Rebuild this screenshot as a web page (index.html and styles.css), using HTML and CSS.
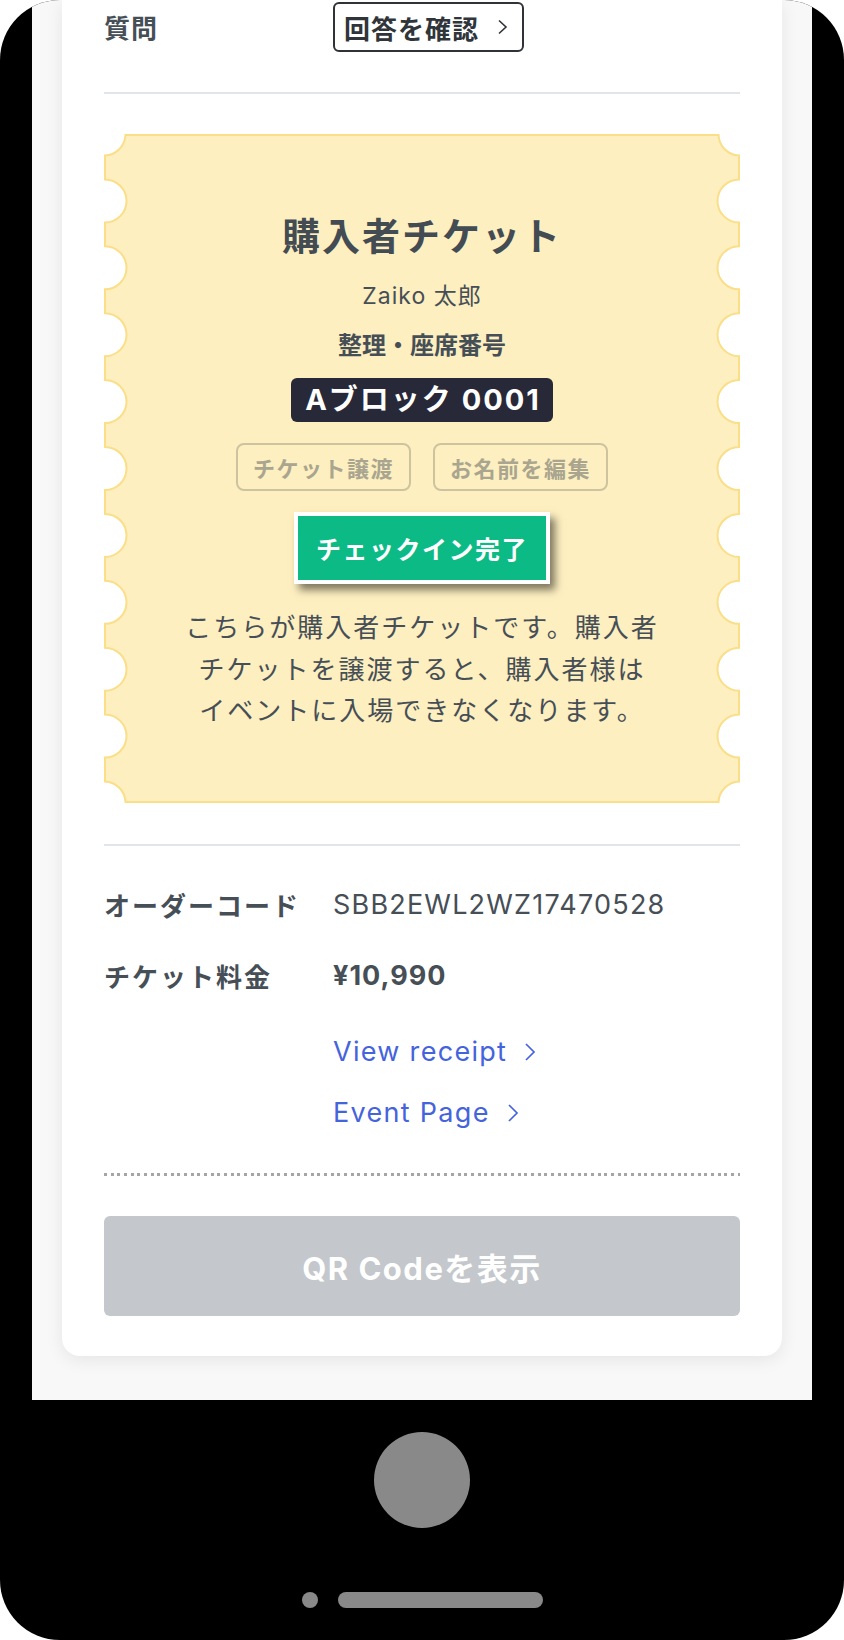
FILE: index.html
```html
<!DOCTYPE html>
<html lang="ja">
<head>
<meta charset="utf-8">
<title>チケット</title>
<link rel="stylesheet" href="styles.css">
</head>
<body>
<div class="phone">
  <div class="screen">
    <div class="card">
      <div class="grid-row qa-row">
        <div class="label">質問</div>
        <div class="value">
          <button class="answer-btn"><span>回答を確認</span><svg class="chev-dark" viewBox="0 0 11 16" width="11" height="16"><polyline points="2,1.5 9,8 2,14.5" fill="none" stroke="#2f3337" stroke-width="1.6"/></svg></button>
        </div>
      </div>
      <hr class="divider first">
      <div class="ticket">
        <h2 class="ticket-title">購入者チケット</h2>
        <div class="holder">Zaiko 太郎</div>
        <div class="seat-label">整理・座席番号</div>
        <div class="seat">Aブロック 0001</div>
        <div class="actions">
          <button class="ghost">チケット譲渡</button>
          <button class="ghost">お名前を編集</button>
        </div>
        <div class="checkin">チェックイン完了</div>
        <p class="note">こちらが購入者チケットです。購入者<br>チケットを譲渡すると、購入者様は<br>イベントに入場できなくなります。</p>
      </div>
      <hr class="divider second">
      <div class="info">
        <div class="label">オーダーコード</div>
        <div class="value code">SBB2EWL2WZ17470528</div>
        <div class="label price-label">チケット料金</div>
        <div class="value price">¥10,990</div>
        <a class="link receipt">View receipt<svg viewBox="0 0 12 20" width="12" height="20"><polyline points="2,2 10,10 2,18" fill="none" stroke="currentColor" stroke-width="1.7"/></svg></a>
        <a class="link event">Event Page<svg viewBox="0 0 12 20" width="12" height="20"><polyline points="2,2 10,10 2,18" fill="none" stroke="currentColor" stroke-width="1.7"/></svg></a>
      </div>
      <div class="dots"></div>
      <button class="qr">QR Codeを表示</button>
    </div>
  </div>
  <div class="hardware">
    <div class="home"></div>
    <div class="indicators"><span class="dot"></span><span class="bar"></span></div>
  </div>
</div>
</body>
</html>
```
FILE: styles.css
```css
* { box-sizing: border-box; }

body {
  margin: 0;
  background: #fff;
  font-family: "Inter", "Noto Sans CJK JP", sans-serif;
  color: #464e56;
}

.phone {
  width: 844px;
  height: 1640px;
  background: #000;
  border-radius: 60px;
  padding: 0 32px;
  display: flex;
  flex-direction: column;
  overflow: hidden;
}

.screen {
  height: 1400px;
  flex: none;
  background: #f8f8f8;
  padding: 0 30px;
}

.card {
  background: #fff;
  border-radius: 0 0 18px 18px;
  box-shadow: 0 4px 18px rgba(0, 0, 0, 0.08);
  padding: 2px 42px 40px;
}

.grid-row {
  display: grid;
  grid-template-columns: 229px 1fr;
  align-items: center;
}

.label {
  font-family: "Noto Sans CJK JP", sans-serif;
  font-weight: 700;
  font-size: 26px;
  line-height: 36px;
  letter-spacing: 2px;
  color: #464e56;
}

.qa-row .label { letter-spacing: 1px; }

.answer-btn {
  display: inline-flex;
  align-items: center;
  gap: 18px;
  height: 50px;
  padding: 0 14px 0 9px;
  border: 2px solid #2f3337;
  border-radius: 6px;
  background: #fff;
  font-family: "Noto Sans CJK JP", sans-serif;
  font-weight: 700;
  font-size: 26px;
  letter-spacing: 1px;
  color: #30353a;
}

.divider {
  border: 0;
  height: 2px;
  background: #e1e4e8;
  margin: 0;
}
.divider.first { margin-top: 40px; }
.divider.second { margin-top: 41px; }

.ticket {
  margin-top: 40px;
  height: 669px;
  padding-top: 76px;
  display: flex;
  flex-direction: column;
  align-items: center;
  background: url("data:image/svg+xml;utf8,<svg xmlns='http://www.w3.org/2000/svg' viewBox='0 0 636 669' preserveAspectRatio='none'><path d='M21.5 1H614.5A21.5 21.5 0 0 0 635 21.5V45.4A21.5 21.5 0 0 0 635 88.4V112.3A21.5 21.5 0 0 0 635 155.3V179.2A21.5 21.5 0 0 0 635 222.2V246.1A21.5 21.5 0 0 0 635 289.1V313A21.5 21.5 0 0 0 635 356V379.9A21.5 21.5 0 0 0 635 422.9V446.8A21.5 21.5 0 0 0 635 489.8V513.7A21.5 21.5 0 0 0 635 556.7V580.6A21.5 21.5 0 0 0 635 623.6V647.5A21.5 21.5 0 0 0 614.5 668H21.5A21.5 21.5 0 0 0 1 647.5V623.6A21.5 21.5 0 0 0 1 580.6V556.7A21.5 21.5 0 0 0 1 513.7V489.8A21.5 21.5 0 0 0 1 446.8V422.9A21.5 21.5 0 0 0 1 379.9V356A21.5 21.5 0 0 0 1 313V289.1A21.5 21.5 0 0 0 1 246.1V222.2A21.5 21.5 0 0 0 1 179.2V155.3A21.5 21.5 0 0 0 1 112.3V88.4A21.5 21.5 0 0 0 1 45.4V21.5A21.5 21.5 0 0 0 21.5 1Z' fill='%23fdefc0' stroke='%23fbde88' stroke-width='2'/></svg>") no-repeat 0 0 / 100% 100%;
}

.ticket-title {
  margin: 0;
  font-family: "Noto Sans CJK JP", sans-serif;
  font-weight: 700;
  font-size: 38px;
  line-height: 48px;
  letter-spacing: 2px;
  color: #434b53;
}

.holder {
  margin-top: 22px;
  font-size: 23px;
  line-height: 32px;
  font-weight: 400;
  letter-spacing: 1px;
}

.seat-label {
  margin-top: 16px;
  font-family: "Noto Sans CJK JP", sans-serif;
  font-weight: 700;
  font-size: 24px;
  line-height: 32px;
}

.seat {
  margin-top: 18px;
  height: 44px;
  line-height: 44px;
  padding: 0 12px 0 14px;
  background: #272838;
  color: #fff;
  font-weight: 700;
  font-size: 29px;
  letter-spacing: 2px;
  border-radius: 6px;
}

.actions {
  margin-top: 21px;
  display: flex;
  gap: 22px;
}

.ghost {
  width: 175px;
  height: 48px;
  padding: 0;
  border: 2px solid #cdc3a0;
  border-radius: 8px;
  background: transparent;
  font-family: "Noto Sans CJK JP", sans-serif;
  font-weight: 700;
  font-size: 22px;
  letter-spacing: 1.5px;
  color: #a9a58f;
}

.checkin {
  margin-top: 21px;
  width: 256px;
  height: 72px;
  border: 4px solid #fff;
  background: #0cba86;
  color: #fff;
  display: flex;
  align-items: center;
  justify-content: center;
  font-family: "Noto Sans CJK JP", sans-serif;
  font-weight: 700;
  font-size: 25px;
  letter-spacing: 1.5px;
  box-shadow: 5px 6px 8px rgba(0, 0, 0, 0.5);
}

.note {
  margin: 21px 0 0;
  font-family: "Noto Sans CJK JP", sans-serif;
  font-size: 26px;
  line-height: 41.7px;
  letter-spacing: 2px;
  text-align: center;
  color: #464e56;
}

.info {
  margin-top: 41px;
  display: grid;
  grid-template-columns: 229px 1fr;
  align-items: center;
}

.value {
  font-size: 27px;
  line-height: 36px;
  letter-spacing: 1.2px;
}

.price-label, .price { margin-top: 35px; }

.price {
  font-weight: 700;
  letter-spacing: 1px;
}

.link {
  grid-column: 2;
  display: inline-flex;
  align-items: center;
  gap: 17px;
  font-size: 27px;
  line-height: 36px;
  letter-spacing: 1.3px;
  color: #4563dd;
  text-decoration: none;
  justify-self: start;
}
.link.receipt { margin-top: 40px; }
.link.event { margin-top: 25px; }

.dots {
  margin-top: 42px;
  height: 3px;
  background: repeating-linear-gradient(90deg, #a5a5a5 0 3px, transparent 3px 6.67px);
}

.qr {
  display: block;
  margin-top: 40px;
  width: 100%;
  height: 100px;
  border: 0;
  border-radius: 6px;
  background: #c4c7cb;
  color: #fff;
  font-family: "Inter", "Noto Sans CJK JP", sans-serif;
  font-weight: 700;
  font-size: 31px;
  letter-spacing: 1.5px;
}

.hardware {
  flex: 1;
  display: flex;
  flex-direction: column;
  align-items: center;
  padding-top: 32px;
}

.home {
  width: 96px;
  height: 96px;
  border-radius: 50%;
  background: #898989;
}

.indicators {
  margin-top: 64px;
  display: flex;
  align-items: center;
  gap: 20px;
}

.dot {
  width: 16px;
  height: 16px;
  border-radius: 50%;
  background: #898989;
}

.bar {
  width: 205px;
  height: 16px;
  border-radius: 8px;
  background: #898989;
}
```
